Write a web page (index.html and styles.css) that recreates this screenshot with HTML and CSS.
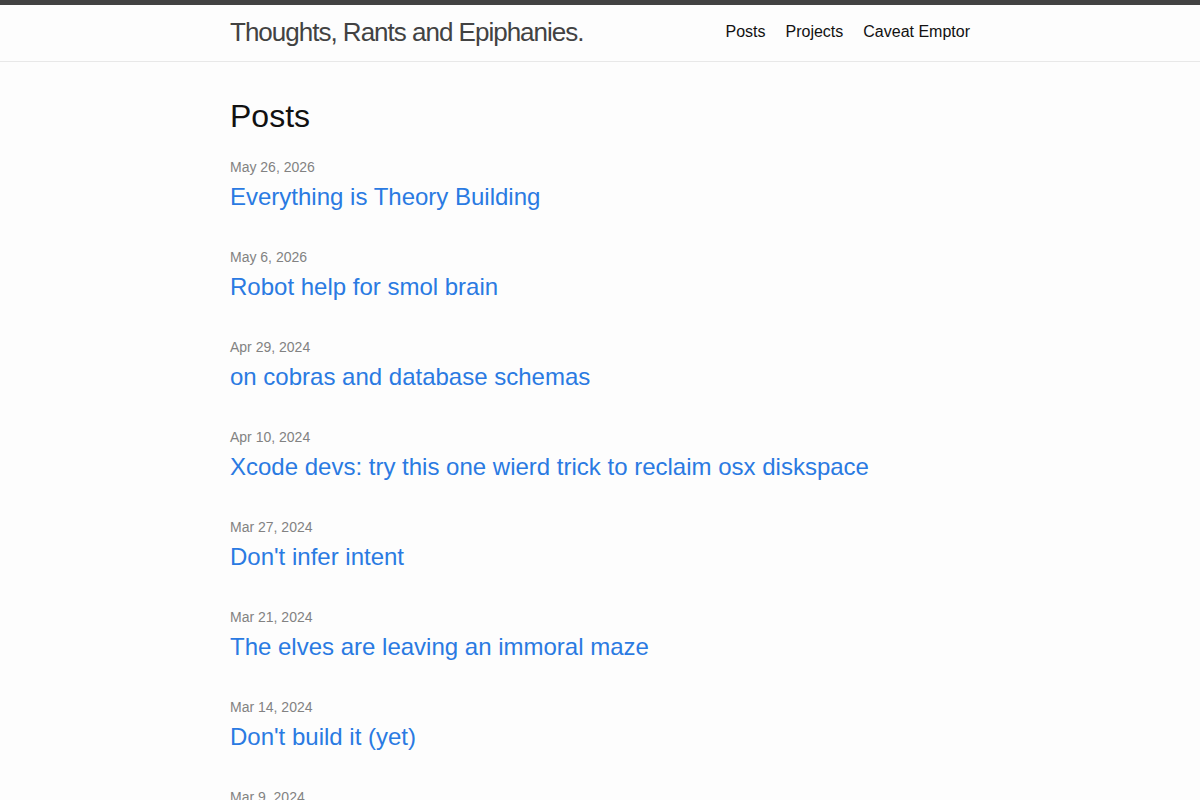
FILE: index.html
```html
<!DOCTYPE html>
<html lang="en">
<head>
    <meta charset="UTF-8">
    <meta name="viewport" content="width=device-width, initial-scale=1.0">
    <title>Posts | Thoughts, Rants and Epiphanies.</title>
    <link rel="stylesheet" href="styles.css">
</head>
<body>
    <header class="site-header">
        <div class="wrapper header-row">
            <a class="site-title" href="#">Thoughts, Rants and Epiphanies.</a>
            <nav class="site-nav">
                <a class="page-link" href="#">Posts</a>
                <a class="page-link" href="#">Projects</a>
                <a class="page-link" href="#">Caveat Emptor</a>
            </nav>
        </div>
    </header>

    <main class="page-content">
        <div class="wrapper">
            <h1 class="post-list-heading">Posts</h1>
            <ul class="post-list">
                <li>
                    <span class="post-meta">May 26, 2026</span>
                    <h3><a class="post-link" href="#">Everything is Theory Building</a></h3>
                </li>
                <li>
                    <span class="post-meta">May 6, 2026</span>
                    <h3><a class="post-link" href="#">Robot help for smol brain</a></h3>
                </li>
                <li>
                    <span class="post-meta">Apr 29, 2024</span>
                    <h3><a class="post-link" href="#">on cobras and database schemas</a></h3>
                </li>
                <li>
                    <span class="post-meta">Apr 10, 2024</span>
                    <h3><a class="post-link" href="#">Xcode devs: try this one wierd trick to reclaim osx diskspace</a></h3>
                </li>
                <li>
                    <span class="post-meta">Mar 27, 2024</span>
                    <h3><a class="post-link" href="#">Don't infer intent</a></h3>
                </li>
                <li>
                    <span class="post-meta">Mar 21, 2024</span>
                    <h3><a class="post-link" href="#">The elves are leaving an immoral maze</a></h3>
                </li>
                <li>
                    <span class="post-meta">Mar 14, 2024</span>
                    <h3><a class="post-link" href="#">Don't build it (yet)</a></h3>
                </li>
                <li>
                    <span class="post-meta">Mar 9, 2024</span>
                    <h3><a class="post-link" href="#">Slow is smooth, smooth is fast</a></h3>
                </li>
            </ul>
        </div>
    </main>
</body>
</html>
```

FILE: styles.css
```css
body {
    margin: 0;
    font-family: 'Liberation Sans', Arial, sans-serif;
    font-size: 16px;
    line-height: 1.5;
    color: #111;
    background-color: #fdfdfd;
}
a {
    text-decoration: none;
}
.wrapper {
    max-width: 740px;
    margin: 0 auto;
    padding: 0 30px;
}
.site-header {
    border-top: 5px solid #424242;
    border-bottom: 1px solid #e8e8e8;
    min-height: 56px;
}
.header-row {
    display: flex;
    justify-content: space-between;
    align-items: flex-start;
    height: 56px;
}
.site-title {
    font-size: 26px;
    font-weight: 300;
    line-height: 54px;
    letter-spacing: -1px;
    color: #424242;
}
.site-nav {
    display: flex;
    gap: 20px;
    line-height: 53px;
}
.page-link {
    color: #111;
}
.page-content {
    padding: 30px 0;
}
.post-list-heading {
    font-size: 32px;
    font-weight: 400;
    line-height: 1.5;
    margin: 0 0 15px;
}
.post-list {
    list-style: none;
    margin: 0;
    padding: 0;
}
.post-list li {
    margin-bottom: 30px;
}
.post-list h3 {
    margin: 0;
    font-weight: 400;
}
.post-meta {
    font-size: 14px;
    color: #828282;
}
.post-link {
    display: block;
    font-size: 24px;
    line-height: 1.5;
    color: #2a7ae2;
}
```
